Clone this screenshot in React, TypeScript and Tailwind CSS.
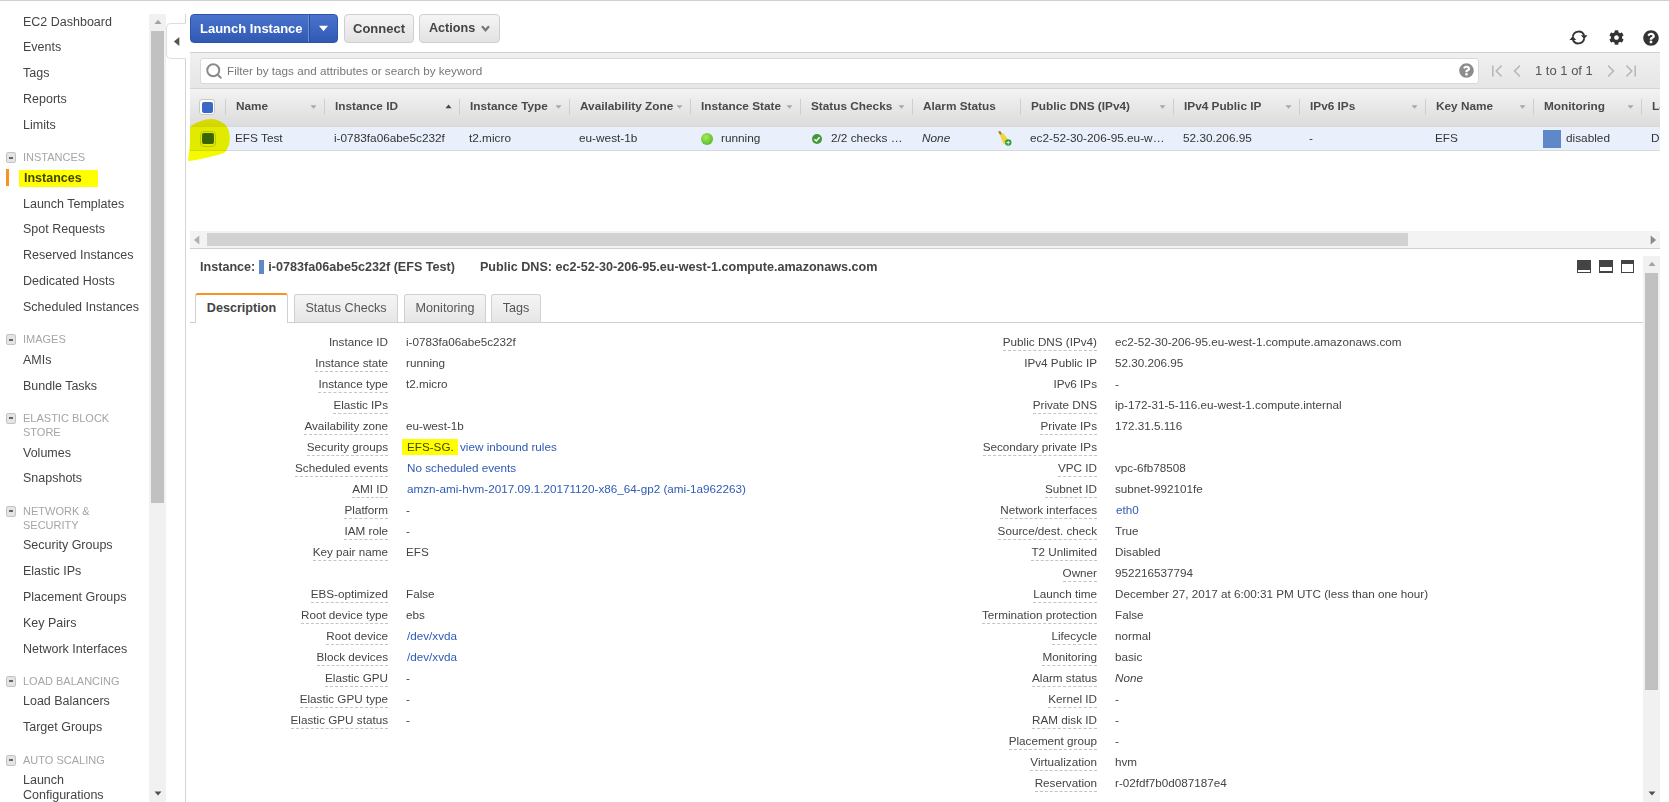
import { ChevronFirst, ChevronLast, ChevronLeft, ChevronRight, Search } from 'lucide-react';
import { FaCog, FaQuestionCircle } from 'react-icons/fa';

type NavItem = { label: string; active?: boolean };
type NavGroup = { title?: string[]; items: NavItem[] };

const nav: NavGroup[] = [
  { items: [{ label: 'EC2 Dashboard' }, { label: 'Events' }, { label: 'Tags' }, { label: 'Reports' }, { label: 'Limits' }] },
  {
    title: ['INSTANCES'],
    items: [
      { label: 'Instances', active: true },
      { label: 'Launch Templates' },
      { label: 'Spot Requests' },
      { label: 'Reserved Instances' },
      { label: 'Dedicated Hosts' },
      { label: 'Scheduled Instances' },
    ],
  },
  { title: ['IMAGES'], items: [{ label: 'AMIs' }, { label: 'Bundle Tasks' }] },
  { title: ['ELASTIC BLOCK', 'STORE'], items: [{ label: 'Volumes' }, { label: 'Snapshots' }] },
  {
    title: ['NETWORK &', 'SECURITY'],
    items: [
      { label: 'Security Groups' },
      { label: 'Elastic IPs' },
      { label: 'Placement Groups' },
      { label: 'Key Pairs' },
      { label: 'Network Interfaces' },
    ],
  },
  { title: ['LOAD BALANCING'], items: [{ label: 'Load Balancers' }, { label: 'Target Groups' }] },
];

const columns = [
  { label: 'Name', arrow: 'down' },
  { label: 'Instance ID', arrow: 'up' },
  { label: 'Instance Type', arrow: 'down' },
  { label: 'Availability Zone', arrow: 'down' },
  { label: 'Instance State', arrow: 'down' },
  { label: 'Status Checks', arrow: 'down' },
  { label: 'Alarm Status' },
  { label: 'Public DNS (IPv4)', arrow: 'down' },
  { label: 'IPv4 Public IP', arrow: 'down' },
  { label: 'IPv6 IPs', arrow: 'down' },
  { label: 'Key Name', arrow: 'down' },
  { label: 'Monitoring', arrow: 'down' },
  { label: 'Launch Time' },
];

const gridCols = 'grid grid-cols-[36px_99px_135px_110px_121px_110px_112px_108px_153px_126px_126px_108px_108px_18px]';

type Detail = { label: string; value?: React.ReactNode; noTip?: boolean };

const Link = ({ children }: { children: React.ReactNode }) => (
  <span className="ml-[1px] text-[#2f5bb7]">{children}</span>
);

const leftDetails: (Detail | null)[] = [
  { label: 'Instance ID', value: 'i-0783fa06abe5c232f', noTip: true },
  { label: 'Instance state', value: 'running' },
  { label: 'Instance type', value: 't2.micro' },
  { label: 'Elastic IPs' },
  { label: 'Availability zone', value: 'eu-west-1b' },
  {
    label: 'Security groups',
    value: (
      <>
        <span className="-ml-[4px] inline-block h-[16px] w-[56px] bg-[#ffff00] pl-[5px] leading-[16px] text-[#444400]">EFS-SG.</span>
        <span className="ml-[2px] text-[#2f5bb7]">view inbound rules</span>
      </>
    ),
  },
  { label: 'Scheduled events', value: <Link>No scheduled events</Link> },
  { label: 'AMI ID', value: <Link>amzn-ami-hvm-2017.09.1.20171120-x86_64-gp2 (ami-1a962263)</Link> },
  { label: 'Platform', value: '-' },
  { label: 'IAM role', value: '-' },
  { label: 'Key pair name', value: 'EFS' },
  null,
  { label: 'EBS-optimized', value: 'False' },
  { label: 'Root device type', value: 'ebs' },
  { label: 'Root device', value: <Link>/dev/xvda</Link> },
  { label: 'Block devices', value: <Link>/dev/xvda</Link> },
  { label: 'Elastic GPU', value: '-' },
  { label: 'Elastic GPU type', value: '-' },
  { label: 'Elastic GPU status', value: '-' },
];

const rightDetails: Detail[] = [
  { label: 'Public DNS (IPv4)', value: 'ec2-52-30-206-95.eu-west-1.compute.amazonaws.com' },
  { label: 'IPv4 Public IP', value: '52.30.206.95', noTip: true },
  { label: 'IPv6 IPs', value: '-', noTip: true },
  { label: 'Private DNS', value: 'ip-172-31-5-116.eu-west-1.compute.internal' },
  { label: 'Private IPs', value: '172.31.5.116' },
  { label: 'Secondary private IPs' },
  { label: 'VPC ID', value: 'vpc-6fb78508' },
  { label: 'Subnet ID', value: 'subnet-992101fe' },
  { label: 'Network interfaces', value: <Link>eth0</Link> },
  { label: 'Source/dest. check', value: 'True' },
  { label: 'T2 Unlimited', value: 'Disabled' },
  { label: 'Owner', value: '952216537794' },
  { label: 'Launch time', value: 'December 27, 2017 at 6:00:31 PM UTC (less than one hour)' },
  { label: 'Termination protection', value: 'False' },
  { label: 'Lifecycle', value: 'normal' },
  { label: 'Monitoring', value: 'basic' },
  { label: 'Alarm status', value: <em>None</em> },
  { label: 'Kernel ID', value: '-' },
  { label: 'RAM disk ID', value: '-' },
  { label: 'Placement group', value: '-' },
  { label: 'Virtualization', value: 'hvm' },
  { label: 'Reservation', value: 'r-02fdf7b0d087187e4' },
];

function Tri({ dir, className }: { dir: 'up' | 'down' | 'left' | 'right'; className: string }) {
  const points = { up: '0,7 5,1 10,7', down: '0,2 10,2 5,8', left: '7,0 7,10 1,5', right: '3,0 3,10 9,5' }[dir];
  return (
    <svg viewBox="0 0 10 10" className={className}>
      <polygon points={points} fill="currentColor" />
    </svg>
  );
}

function SideNav() {
  return (
    <div className="h-full w-[149px] shrink-0 overflow-hidden pt-[8px]">
      {nav.map((group, i) => (
        <div key={i}>
          {group.title && (
            <div className="relative mb-[1px] mt-[12px] pl-[23px] text-[11px] leading-[14px] text-[#a5a5a5]">
              <span className="absolute left-[6px] top-[2px] flex h-[11px] w-[10px] items-center justify-center rounded-[2px] border border-[#c4c4c4] bg-[#e4e4e4]">
                <span className="h-[2px] w-[4px] bg-[#666]" />
              </span>
              {group.title.map((t) => (
                <div key={t}>{t}</div>
              ))}
            </div>
          )}
          {group.items.map((item) => (
            <div key={item.label} className="relative flex h-[25.85px] items-center pl-[23px] text-[12.5px] text-[#444]">
              {item.active ? (
                <>
                  <span className="absolute left-[6px] top-[4px] h-[17px] w-[3px] bg-[#f7931e]" />
                  <span className="-ml-[4px] w-[79px] bg-[#ffff00] pl-[5px] font-bold leading-[17px] text-[#444400]">{item.label}</span>
                </>
              ) : (
                item.label
              )}
            </div>
          ))}
        </div>
      ))}
      <div className="relative mb-[1px] mt-[12px] pl-[23px] text-[11px] leading-[14px] text-[#a5a5a5]">
        <span className="absolute left-[6px] top-[2px] flex h-[11px] w-[10px] items-center justify-center rounded-[2px] border border-[#c4c4c4] bg-[#e4e4e4]">
          <span className="h-[2px] w-[4px] bg-[#666]" />
        </span>
        AUTO SCALING
      </div>
      <div className="pl-[23px] pt-[5px] text-[12.5px] leading-[15px] text-[#444]">
        Launch
        <br />
        Configurations
      </div>
    </div>
  );
}

function ScrollBar({ thumbClass }: { thumbClass: string }) {
  return (
    <div className="flex w-[17px] shrink-0 flex-col items-center bg-[#f1f1f1]">
      <div className="flex h-[17px] w-full items-center justify-center">
        <Tri dir="up" className="h-[7px] w-[8px] text-[#a3a3a3]" />
      </div>
      <div className={`w-[13px] bg-[#c1c1c1] ${thumbClass}`} />
      <div className="flex-1" />
      <div className="flex h-[17px] w-full items-center justify-center">
        <Tri dir="down" className="h-[7px] w-[8px] text-[#505050]" />
      </div>
    </div>
  );
}

function Toolbar() {
  return (
    <div className="flex h-[51px] shrink-0 items-start pt-[13px]">
      <div className="flex h-[29px] w-[148px] rounded-[4px] border border-[#2f55a8] bg-gradient-to-b from-[#4a74cc] to-[#2f59b3] text-[13px] font-bold leading-[27px] text-white">
        <span className="w-[118px] border-r border-[#6f8fd4] pl-[9px]">Launch Instance</span>
        <span className="flex flex-1 items-center justify-center border-l border-[#2a4f9f]">
          <Tri dir="down" className="h-[9px] w-[11px] text-white" />
        </span>
      </div>
      <div className="ml-[6px] h-[29px] w-[70px] rounded-[4px] border border-[#cfcfcf] bg-gradient-to-b from-[#f5f5f5] to-[#e2e2e2] text-center text-[13px] font-bold leading-[27px] text-[#444]">
        Connect
      </div>
      <div className="ml-[5px] flex h-[29px] w-[81px] items-center rounded-[4px] border border-[#cfcfcf] bg-gradient-to-b from-[#f5f5f5] to-[#e2e2e2] pl-[9px] text-[12.6px] font-bold text-[#444]">
        Actions
        <svg viewBox="0 0 10 8" className="ml-[6px] h-[7px] w-[9px] text-[#777]">
          <path d="M1 1.5 L5 6 L9 1.5" fill="none" stroke="currentColor" strokeWidth="2.6" />
        </svg>
      </div>
      <div className="flex-1" />
      <div className="mr-[1px] mt-[14px] flex items-center text-[#333]">
        <svg viewBox="0 0 20 20" className="h-[19px] w-[19px]" fill="none">
          <path d="M4 9 A6.2 6.2 0 0 1 16 8" stroke="#333" strokeWidth="2" />
          <path d="M16 11 A6.2 6.2 0 0 1 4 12" stroke="#333" strokeWidth="2" />
          <polygon points="12.5,7.5 19.5,7.5 16,11.5" fill="#333" />
          <polygon points="0.5,12.5 7.5,12.5 4,8.5" fill="#333" />
        </svg>
        <FaCog className="ml-[21px] h-[15px] w-[15px]" />
        <FaQuestionCircle className="ml-[19px] h-[16px] w-[16px]" />
      </div>
    </div>
  );
}

function FilterBar() {
  return (
    <div className="flex h-[36px] shrink-0 items-center border-t border-[#cfcfcf] bg-gradient-to-b from-[#f0f0f0] to-[#e6e6e6] pl-[10px]">
      <div className="flex h-[26px] w-[1279px] items-center rounded-[3px] border border-[#d9d9d9] bg-white pl-[4px] pr-[4px] text-[11.7px] text-[#777]">
        <Search className="h-[18px] w-[18px] text-[#8a8a8a]" strokeWidth={2.6} />
        <span className="ml-[4px] flex-1">Filter by tags and attributes or search by keyword</span>
        <FaQuestionCircle className="h-[15px] w-[15px] text-[#8c8c8c]" />
      </div>
      <div className="ml-[8px] flex items-center text-[13px] text-[#555]">
        <ChevronFirst className="h-[20px] w-[20px] text-[#b5b5b5]" strokeWidth={1.8} />
        <ChevronLeft className="h-[20px] w-[20px] text-[#b5b5b5]" strokeWidth={1.8} />
        <span className="ml-[8px] w-[66px]">1 to 1 of 1</span>
        <ChevronRight className="h-[20px] w-[20px] text-[#b5b5b5]" strokeWidth={1.8} />
        <ChevronLast className="h-[20px] w-[20px] text-[#b5b5b5]" strokeWidth={1.8} />
      </div>
    </div>
  );
}

function InstanceTable() {
  return (
    <div className="h-[143px] shrink-0 overflow-hidden">
      <div className={`${gridCols} h-[38px] items-start border-t border-[#d4d4d4] bg-gradient-to-b from-[#f3f3f3] to-[#dcdcdc] pt-[10px] text-[11.8px] font-bold text-[#4a4a4a]`}>
        <div className="flex h-[16px] items-center justify-center border-r border-[#cfcfcf]">
          <div className="-ml-[1px] flex h-[16px] w-[16px] items-center justify-center rounded-[3px] border border-[#c8c8c8] bg-white">
            <span className="h-[11px] w-[11px] rounded-[2px] bg-[#3b66c5]" />
          </div>
        </div>
        {columns.map((col) => (
          <div key={col.label} className="flex h-[16px] items-center justify-between overflow-hidden whitespace-nowrap border-r border-[#cfcfcf] pl-[10px] pr-[7px] last:border-r-0">
            {col.label}
            {col.arrow === 'down' && <Tri dir="down" className="h-[6px] w-[7px] shrink-0 text-[#a8a8a8]" />}
            {col.arrow === 'up' && <Tri dir="up" className="h-[6px] w-[7px] shrink-0 text-[#444]" />}
          </div>
        ))}
      </div>
      <div className={`${gridCols} h-[25px] items-center whitespace-nowrap border-y border-[#d9d9d9] bg-[#e9f0fb] text-[11.8px] text-[#333]`}>
        <div className="flex h-full items-center justify-center">
          <div className="flex h-[16px] w-[16px] items-center justify-center rounded-[4px] border border-[#c8c8c8]">
            <span className="h-[11px] w-[12px] rounded-[2px] bg-[#3b66c5]" />
          </div>
        </div>
        <div className="pl-[9px]">EFS Test</div>
        <div className="pl-[9px]">i-0783fa06abe5c232f</div>
        <div className="pl-[9px]">t2.micro</div>
        <div className="pl-[9px]">eu-west-1b</div>
        <div className="flex items-center pl-[10px]">
          <span className="mr-[8px] h-[12px] w-[12px] rounded-full bg-[radial-gradient(circle_at_40%_35%,#a6ea5c,#43ab18)]" />
          running
        </div>
        <div className="flex items-center pl-[11px]">
          <svg viewBox="0 0 10 10" className="mr-[9px] h-[10px] w-[10px]">
            <circle cx="5" cy="5" r="5" fill="#3f9a3a" />
            <path d="M2.4 5.2 L4.3 7 L7.6 3.2" fill="none" stroke="#fff" strokeWidth="1.5" />
          </svg>
          2/2 checks …
        </div>
        <div className="flex items-center justify-between pl-[9px] pr-[9px]">
          <em>None</em>
          <svg viewBox="0 0 14 14" className="h-[15px] w-[15px]">
            <path d="M1 0.5 L3 0 L5 3 L3 4 Z" fill="#a8752a" />
            <path d="M2.5 3.5 L6 2 L11 9 L9 12 L6 12 Z" fill="#f2d43c" />
            <circle cx="10.5" cy="10.8" r="3" fill="#2f9e3a" />
            <path d="M8.8 10.8 H12.2 M10.5 9.1 V12.5" stroke="#c8f0c8" strokeWidth="1" />
          </svg>
        </div>
        <div className="pl-[9px]">ec2-52-30-206-95.eu-w…</div>
        <div className="pl-[9px]">52.30.206.95</div>
        <div className="pl-[9px]">-</div>
        <div className="pl-[9px]">EFS</div>
        <div className="flex items-center pl-[9px]">
          <span className="mr-[5px] h-[18px] w-[18px] bg-[#5e88c8]" />
          disabled
        </div>
        <div className="overflow-hidden pl-[9px]">Disabled</div>
      </div>
    </div>
  );
}

function DetailColumn({ rows, className }: { rows: (Detail | null)[]; className: string }) {
  return (
    <div className={`shrink-0 ${className}`}>
      {rows.map((row, i) =>
        row ? (
          <div key={row.label} className="grid h-[21px] grid-cols-[198px_1fr] items-center gap-x-[18px] whitespace-nowrap text-[11.7px] text-[#444]">
            <div className="text-right">
              <span className={`inline-block h-[17px] leading-[16px] ${row.noTip ? '' : 'border-b border-dashed border-[#c4c4c4]'}`}>{row.label}</span>
            </div>
            <div>{row.value}</div>
          </div>
        ) : (
          <div key={i} className="h-[21px]" />
        ),
      )}
    </div>
  );
}

function DetailPane() {
  return (
    <div className="flex min-h-0 flex-1">
      <div className="min-w-0 flex-1 overflow-hidden">
        <div className="flex h-[44px] items-start pl-[10px] pr-[9px] pt-[10px] text-[12.6px] font-bold leading-[16px] text-[#444]">
          <span>Instance:</span>
          <span className="ml-[4px] mt-[1px] h-[14px] w-[5px] bg-[#5e88c8]" />
          <span className="ml-[4px]">i-0783fa06abe5c232f (EFS Test)</span>
          <span className="ml-[25px]">Public DNS: ec2-52-30-206-95.eu-west-1.compute.amazonaws.com</span>
          <div className="ml-auto mt-[1px] flex gap-[8px]">
            <span className="flex h-[13px] w-[14px] items-end bg-[#444] px-[1px] pb-[1px]">
              <span className="h-[2px] w-full bg-white" />
            </span>
            <span className="flex h-[13px] w-[14px] items-end bg-[#444] px-[1px] pb-[2px]">
              <span className="h-[4px] w-full bg-white" />
            </span>
            <span className="flex h-[13px] w-[13px] items-end bg-[#444] px-[1px] pb-[1px]">
              <span className="h-[8px] w-full bg-white" />
            </span>
          </div>
        </div>
        <div className="flex h-[30px] items-end border-b border-[#cfcfcf] pl-[5px] text-[12.6px] text-[#555]">
          <div className="relative z-10 -mb-[1px] h-[30px] w-[93px] rounded-t-[3px] border-x border-t-2 border-[#d0d0d0] border-t-[#f7931e] bg-white text-center font-bold leading-[27px] text-[#444]">
            Description
          </div>
          {[
            { label: 'Status Checks', w: 'ml-[6px] w-[104px]' },
            { label: 'Monitoring', w: 'ml-[6px] w-[82px]' },
            { label: 'Tags', w: 'ml-[5px] w-[50px]' },
          ].map((t) => (
            <div key={t.label} className={`h-[28px] rounded-t-[3px] border border-b-0 border-[#d0d0d0] bg-gradient-to-b from-[#f5f5f5] to-[#e6e6e6] text-center leading-[27px] ${t.w}`}>
              {t.label}
            </div>
          ))}
        </div>
        <div className="flex pt-[8px]">
          <DetailColumn rows={leftDetails} className="w-[709px]" />
          <DetailColumn rows={rightDetails} className="w-[700px]" />
        </div>
      </div>
      <div className="mt-[7px] flex">
        <ScrollBar thumbClass="h-[417px]" />
      </div>
    </div>
  );
}

export default function App() {
  return (
    <div className="relative flex h-[802px] w-[1669px] overflow-hidden border-t border-[#cfcfcf] bg-white font-['Liberation_Sans',Arial,sans-serif]">
      <SideNav />
      <div className="mt-[13px] flex">
        <ScrollBar thumbClass="h-[472px]" />
      </div>
      <div className="mt-[13px] flex w-[20px] shrink-0 flex-col">
        <div className="h-[9px] border-r border-[#d4d4d4]" />
        <div className="flex h-[36px] items-center justify-center rounded-l-[5px] border-y border-l border-[#dedede] bg-white pl-[1px]">
          <Tri dir="left" className="h-[11px] w-[9px] text-[#555]" />
        </div>
        <div className="flex-1 border-r border-[#d4d4d4]" />
      </div>
      <div className="flex min-w-0 flex-1 flex-col pl-[4px] pr-[9px]">
        <Toolbar />
        <FilterBar />
        <InstanceTable />
        <div className="flex h-[18px] shrink-0 items-center border-b border-[#cfcfcf] bg-[#f3f3f3]">
          <Tri dir="left" className="ml-[3px] h-[10px] w-[9px] text-[#b0b0b0]" />
          <div className="ml-[5px] h-[13px] w-[1201px] bg-[#d2d2d2]" />
          <div className="flex-1" />
          <Tri dir="right" className="mr-[3px] h-[10px] w-[9px] text-[#8a8a8a]" />
        </div>
        <DetailPane />
      </div>
      <svg viewBox="0 0 43 43" className="pointer-events-none absolute left-[188px] top-[117px] h-[43px] w-[43px] mix-blend-multiply">
        <path d="M2 9 C8 4 16 1 24 1 C33 2 40 7 41 14 C43 22 41 31 36 35 C26 38 12 42 0 43 C2 30 2 20 2 9 Z" fill="#f6fa00" />
      </svg>
    </div>
  );
}
